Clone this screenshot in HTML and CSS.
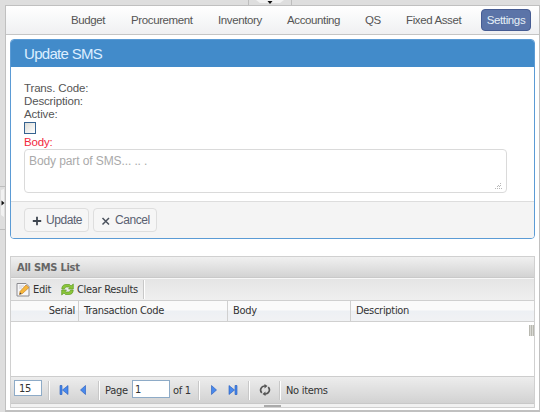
FILE: index.html
```html
<!DOCTYPE html>
<html lang="en">
<head>
<meta charset="utf-8">
<title>Update SMS</title>
<link rel="stylesheet" href="styles.css">
</head>
<body>
<div class="split-top"><div class="top-handle"><svg width="30" height="5" viewBox="0 0 30 5"><path d="M1 0h28L25 3H5z" fill="#f2f2f2"/><path d="M12.500 1h5L15 4z" fill="#111"/></svg></div></div>
<div class="workspace">
<div class="split-left"><div class="left-handle"><svg width="5" height="30" viewBox="0 0 5 30"><path d="M1 2l3-1v28l-3-2z" fill="#f2f2f2"/><path d="M1.500 12.500v5L4.500 15z" fill="#111"/></svg></div></div>
<main class="page">
<nav class="nav">
<a>Budget</a><a>Procurement</a><a>Inventory</a><a>Accounting</a><a>QS</a><a>Fixed Asset</a><a class="active">Settings</a>
</nav>
<section class="panel">
<h1 class="panel-title">Update SMS</h1>
<div class="form">
<div>Trans. Code:</div>
<div>Description:</div>
<div>Active:</div>
<div class="check"></div>
<div class="required">Body:</div>
<div class="textarea"><span>Body part of SMS... .. .</span>
<svg class="grip" width="7" height="7" viewBox="0 0 7 7" fill="#b8b8b8"><path d="M5 0h1v1H5zM3 2h1v1H3zM5 2h1v1H5zM2 3h1v1H2zM4 3h1v1H4zM0 5h1v1H0zM2 5h1v1H2zM4 5h1v1H4zM6 5h1v1H6z"/></svg></div>
</div>
<div class="actions">
<button class="btn update"><svg width="10" height="10" viewBox="0 0 10 10"><path d="M5 .8v8.400M.8 5h8.400" stroke="#3f4650" stroke-width="1.800"/></svg>Update</button>
<button class="btn cancel"><svg width="10" height="10" viewBox="0 0 10 10"><path d="M1.500 2l6.500 6.500M8 2L1.500 8.500" stroke="#4b525d" stroke-width="1.500"/></svg>Cancel</button>
</div>
</section>
<section class="grid">
<h2 class="grid-title">All SMS List</h2>
<div class="toolbar">
<svg width="14" height="16" viewBox="0 0 14 16"><path d="M1 1.500h9l3 3v9.500H1z" fill="#f6f6f8" stroke="#8b8b90"/><path d="M3 4h5M3 6h3" stroke="#d0d0d5"/><path d="M4 9.500L10 3l3 2.500-6.500 6-3 1z" fill="#f6b73c" stroke="#c78328" stroke-width=".7"/><path d="M3.500 12.500l.7-2 1.300 1.300z" fill="#444"/></svg>
<span class="t-edit">Edit</span>
<svg width="13" height="13" viewBox="0 0 13 13" fill="#8cc63a" stroke="#5f9c22" stroke-width=".7"><path d="M.8 6C.8 3 2.500 1.500 5 1.500h3.500L10 3l2.300-2v5H7.500L9 4.500 8 4H5.500C4 4 3.500 6 3.500 6z"/><path d="M12.200 7c0 3-1.700 4.500-4.200 4.500H4.500L3 10l-2.300 2V7h4.800L4 8.500l1 .5h2.500C9 9 9.500 7 9.500 7z"/></svg>
<span class="t-clear">Clear Results</span><i class="sep"></i>
</div>
<div class="head"><div class="serial">Serial</div><div>Transaction Code</div><div>Body</div><div>Description</div></div>
<div class="rows"><i class="thumb"></i></div>
<div class="pager">
<div class="field size">15</div><i class="sep s1"></i>
<svg class="first" width="10" height="10" viewBox="0 0 10 10"><path d="M1 .5h2v9H1zM9 .5v9L3.500 5z" fill="#4889ed" stroke="#2459bb" stroke-width=".6"/></svg>
<svg class="prev" width="6" height="10" viewBox="0 0 6 10"><path d="M5.500.5v9L.5 5z" fill="#4889ed" stroke="#2459bb" stroke-width=".6"/></svg>
<i class="sep s2"></i><span class="p-label">Page</span><div class="field num">1</div><span class="p-of">of 1</span><i class="sep s3"></i>
<svg class="next" width="6" height="10" viewBox="0 0 6 10"><path d="M.5.500v9L5.500 5z" fill="#4889ed" stroke="#2459bb" stroke-width=".6"/></svg>
<svg class="last" width="10" height="10" viewBox="0 0 10 10"><path d="M7 .5h2v9H7zM1 .5v9L6.500 5z" fill="#4889ed" stroke="#2459bb" stroke-width=".6"/></svg>
<i class="sep s4"></i>
<svg class="reload" width="12" height="12" viewBox="0 0 12 12"><g fill="none" stroke="#555" stroke-width="1.700"><path d="M2.800 8.800A4 4 0 0 1 6 2"/><path d="M9.200 3.200A4 4 0 0 1 6 10"/></g><path d="M5.500 0l3 2-3 2.500zM6.500 12l-3-2 3-2.500z" fill="#555"/></svg>
<i class="sep s5"></i><span class="p-info">No items</span>
</div>
<div class="resize"><i></i></div>
</section>
</main>
</div>
</body>
</html>
```

FILE: styles.css
```css
* { box-sizing: border-box; }
body { margin: 0; width: 540px; height: 412px; overflow: hidden; background: #dedede; font-family: "Liberation Sans", Arial, sans-serif; font-size: 11.5px; letter-spacing: -.15px; color: #555; }
svg { display: block; flex: none; }
i { display: block; flex: none; }
.split-top { height: 5px; display: flex; padding-left: 248px; }
.top-handle { width: 44px; border: solid #bdbdbd; border-width: 0 1px; display: flex; justify-content: center; }
.workspace { height: 407px; display: flex; }
.split-left { width: 5px; padding-top: 181px; }
.left-handle { height: 44px; border: solid #bdbdbd; border-width: 1px 0; padding-top: 1px; }
.page { width: 535px; height: 407px; background: #fff; border: 1px solid #c0c0c0; border-bottom-width: 2px; padding: 0 4px; }
.nav { height: 29px; margin: 0 -4px; padding-left: 65px; border-bottom: 1px solid #c5c5c5; background: linear-gradient(#fff, #eff0f2); display: grid; grid-template-columns: 60px 87px 69px 78px 41px 75px 50px; align-items: center; letter-spacing: -.38px; }
.nav a { color: #555; white-space: nowrap; }
.nav .active { height: 22px; line-height: 20px; text-align: center; border: 1px solid #465c93; border-radius: 4px; background: #5b74a8; color: #e6f0f7; }
.panel { height: 200px; margin-top: 4px; border: 1px solid #5b9bd5; border-radius: 4px; overflow: hidden; background: #fff; display: flex; flex-direction: column; }
.panel-title { margin: 0; height: 27px; padding-left: 13px; line-height: 27px; background: #428bca; color: #dceeff; font-size: 15px; font-weight: 400; letter-spacing: -.7px; }
.form { height: 134px; padding: 15px 27px 0 13px; line-height: 13px; }
.check { width: 12px; height: 12px; margin: 1px 0 2px; border: 1px solid #366390; background: linear-gradient(135deg, #dcdcd7, #fff); }
.required { color: #f2283d; }
.textarea { height: 44px; border: 1px solid #dadada; border-radius: 4px; padding: 5px 4px; color: #aaa; display: flex; justify-content: space-between; font-size: 12px; letter-spacing: -.1px; }
.grip { align-self: flex-end; margin-bottom: -3px; }
.actions { flex: 1; border-top: 1px solid #ddd; background: #f4f4f4; padding: 6px 13px; display: flex; gap: 4px; }
.btn { height: 24px; display: flex; align-items: center; gap: 4px; padding: 0 7px; border: 1px solid #dedede; border-radius: 4px; background: #f6f6f6; color: #596070; font: 12px "Liberation Sans", Arial, sans-serif; letter-spacing: -.45px; }
.btn svg { margin-top: 2px; }
.update { width: 65px; }
.cancel { width: 64px; }
.grid { height: 152px; margin-top: 17px; border: 1px solid #d0d0d0; font-family: "DejaVu Sans Condensed", "DejaVu Sans", sans-serif; font-stretch: condensed; font-size: 11px; letter-spacing: -.3px; color: #333; white-space: nowrap; }
.grid-title { margin: 0; height: 21px; padding-left: 6px; line-height: 21px; border-bottom: 1px solid #c9c9c9; background: linear-gradient(#f0f0f0, #d3d3d3); color: #666; font-size: 11px; letter-spacing: -.25px; }
.toolbar { height: 23px; padding-left: 5px; border-top: 1px solid #f7f7f7; border-bottom: 1px solid #cfcfcf; background: linear-gradient(#e5e5e5, #efefef); display: flex; align-items: center; }
.t-edit { width: 28px; margin-left: 3px; }
.t-clear { width: 66px; margin-left: 3px; }
.sep { width: 2px; height: 19px; border-left: 1px solid #c8c8c8; border-right: 1px solid #fff; }
.head { height: 21px; display: grid; grid-template-columns: 68px 149px 123px 1fr; line-height: 20px; border-bottom: 1px solid #d0d0d0; background: linear-gradient(#fafafa 0 45%, #edf0f4 50%, #f1f2f4); }
.head div { padding-left: 5px; border-right: 1px solid #d0d0d0; }
.head div:last-child { border: 0; }
.head .serial { text-align: right; padding: 0 3px; }
.rows { height: 54px; display: flex; justify-content: flex-end; padding-top: 3px; }
.thumb { width: 5px; height: 11px; background: repeating-linear-gradient(90deg, #b8b8b0 0 1px, #d9d9d4 1px 2px); }
.pager { height: 28px; padding-left: 3px; border-top: 1px solid #cdcdcd; border-bottom: 1px solid #c8c8c8; background: linear-gradient(#ededed, #d2d2d2); display: flex; align-items: center; }
.field { border: 1px solid #8eabc7; background: #fff; flex: none; }
.size { width: 28px; height: 16px; padding-left: 4px; line-height: 15px; margin-top: -4px; }
.num { width: 38px; height: 18px; padding-left: 2px; line-height: 17px; margin-top: -3px; }
.s1 { margin-left: 6px; }
.first { margin-left: 9px; }
.prev { margin-left: 11px; }
.s2 { margin-left: 12px; }
.p-label { width: 23px; margin: 1px 4px 0 5px; }
.p-of { width: 20px; margin: 1px 0 0 3px; }
.s3 { margin-left: 5px; }
.next { margin-left: 11px; }
.last { margin-left: 11px; }
.s4 { margin-left: 10px; }
.reload { margin-left: 9px; }
.s5 { margin-left: 8px; }
.p-info { margin-left: 5px; }
.resize { background: #f1f1f1; height: 3px; display: flex; align-items: flex-end; justify-content: center; }
.resize i { width: 17px; height: 2px; background: #aaa; }
```
